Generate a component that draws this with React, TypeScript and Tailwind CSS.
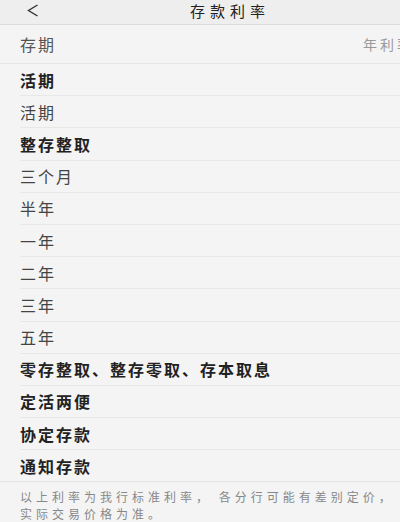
import React from 'react'

type Row = { label: string; bold?: boolean }

const rows: Row[] = [
  { label: '活期', bold: true },
  { label: '活期' },
  { label: '整存整取', bold: true },
  { label: '三个月' },
  { label: '半年' },
  { label: '一年' },
  { label: '二年' },
  { label: '三年' },
  { label: '五年' },
  { label: '零存整取、整存零取、存本取息', bold: true },
  { label: '定活两便', bold: true },
  { label: '协定存款', bold: true },
  { label: '通知存款', bold: true },
]

const font = { fontFamily: '"Noto Sans CJK SC", "Noto Sans", sans-serif' }

export default function App() {
  return (
    <div className="h-[522px] w-[400px] overflow-hidden bg-[#f4f4f4]" style={font}>
      <div className="w-[460px]">
        {/* 상단 헤더 */}
        <div className="relative flex h-[25px] items-center justify-center border-b border-[#dcdcdc] bg-[#eeeeee]">
          <svg
            className="absolute left-[27px] top-[4px]"
            width="12"
            height="13"
            viewBox="0 0 12 13"
            fill="none"
          >
            <path d="M10.5 1 L1.5 6.5 L10.5 12" stroke="#333" strokeWidth="1.4" />
          </svg>
          <span className="mb-[3px] text-[15px] leading-none tracking-[5px] text-[#222]">存款利率</span>
        </div>

        {/* 표 머리 */}
        <div className="flex h-[39px] items-center border-b border-[#e4e4e4] pl-5">
          <span className="text-[16px] tracking-[2px] text-[#555]">存期</span>
          <span className="ml-auto mr-[46px] text-[14px] tracking-[3px] text-[#999]">年利率</span>
        </div>

        {rows.map((r, i) => (
          <div
            key={i}
            className={`flex h-[32.2px] items-center pl-5 ${
              i === rows.length - 1 ? 'border-b border-[#e4e4e4]' : ''
            }`}
          >
            <div
              className={`flex h-full flex-1 items-center ${
                i === rows.length - 1 ? '' : 'border-b border-[#e8e8e8]'
              }`}
            >
              <span
                className={`text-[16px] tracking-[2px] ${
                  r.bold ? 'font-semibold text-[#222]' : 'text-[#444]'
                }`}
              >
                {r.label}
              </span>
            </div>
          </div>
        ))}

        <p className="px-5 pt-[6px] text-[12px] leading-[17px] tracking-[4px] text-[#888]">
          以上利率为我行标准利率， 各分行可能有差别定价，
          <br />
          实际交易价格为准。
        </p>
      </div>
    </div>
  )
}
